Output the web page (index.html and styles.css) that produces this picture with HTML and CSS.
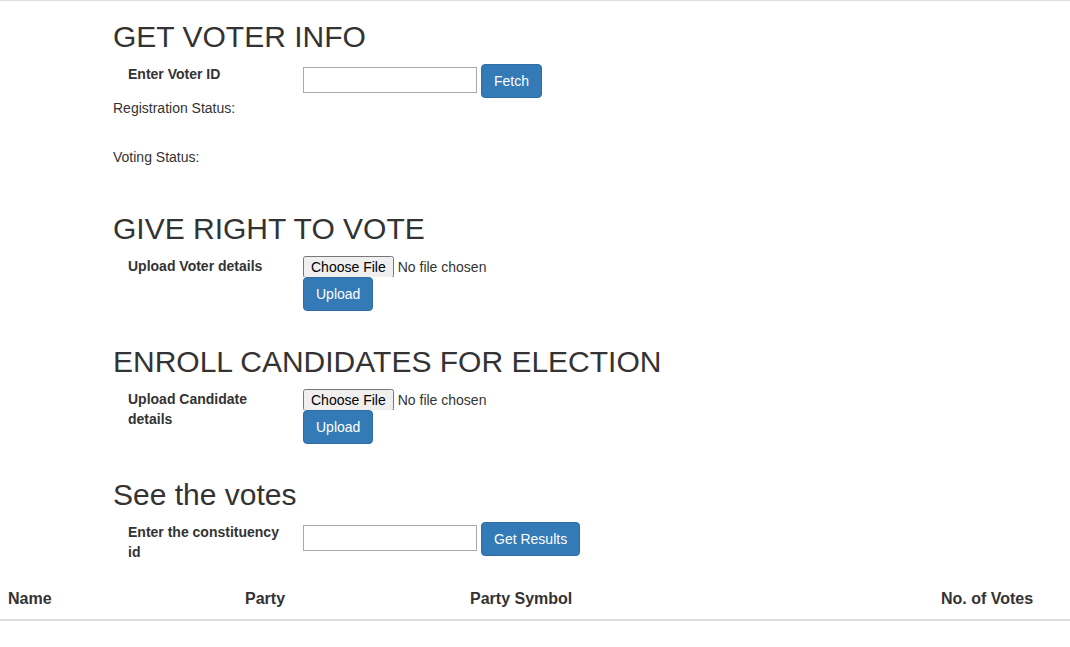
FILE: index.html
```html
<!DOCTYPE html>
<html lang="en">
<head>
<meta charset="utf-8">
<title>Voting Admin</title>
<link rel="stylesheet" href="styles.css">
</head>
<body>
<div class="forms">
  <section class="sec sec-info">
    <h2 class="title">GET VOTER INFO</h2>
    <div class="row">
      <label class="lbl" for="vid">Enter Voter ID</label>
      <div class="field inline">
        <input class="txt" id="vid" type="text">
        <button class="btn" type="button">Fetch</button>
      </div>
    </div>
    <p class="status status-reg">Registration Status:</p>
    <p class="status status-vote">Voting Status:</p>
  </section>

  <section class="sec">
    <h2 class="title">GIVE RIGHT TO VOTE</h2>
    <div class="row row-gap">
      <label class="lbl">Upload Voter details</label>
      <div class="field stack">
        <input class="file" type="file">
        <button class="btn" type="button">Upload</button>
      </div>
    </div>
  </section>

  <section class="sec">
    <h2 class="title">ENROLL CANDIDATES FOR ELECTION</h2>
    <div class="row row-gap">
      <label class="lbl">Upload Candidate details</label>
      <div class="field stack">
        <input class="file" type="file">
        <button class="btn" type="button">Upload</button>
      </div>
    </div>
  </section>

  <section class="sec">
    <h2 class="title">See the votes</h2>
    <div class="row row-last">
      <label class="lbl" for="cid">Enter the constituency id</label>
      <div class="field inline">
        <input class="txt" id="cid" type="text">
        <button class="btn" type="button">Get Results</button>
      </div>
    </div>
  </section>
</div>

<table class="results">
  <colgroup>
    <col class="c-name">
    <col class="c-party">
    <col class="c-symbol">
    <col class="c-votes">
  </colgroup>
  <thead>
    <tr>
      <th>Name</th>
      <th>Party</th>
      <th>Party Symbol</th>
      <th>No. of Votes</th>
    </tr>
  </thead>
  <tbody></tbody>
</table>
</body>
</html>
```

FILE: styles.css
```css
* {
  box-sizing: border-box;
}

html, body {
  background: #fff;
}

body {
  margin: 0;
  border-top: 1px solid #dddddd;
  font-family: "Liberation Sans", Arial, Helvetica, sans-serif;
  font-size: 14px;
  line-height: 1.42857;
  color: #333333;
}

.forms {
  padding-left: 113px;
}

.sec {
  display: flow-root;
}

.title {
  margin: 19px 0 11px;
  font-size: 30px;
  line-height: 1.1;
  font-weight: 500;
  color: #333333;
}

.row {
  display: flex;
  align-items: flex-start;
}

.row-gap {
  margin-bottom: 15px;
}

.row-last {
  margin-bottom: 17px;
}

.lbl {
  width: 190px;
  flex: none;
  padding: 1px 15px 0;
  font-weight: bold;
}

.field {
  display: flex;
}

.field.inline {
  gap: 4px;
  align-items: flex-start;
}

.field.stack {
  flex-direction: column;
  align-items: flex-start;
}

.txt {
  width: 174px;
  height: 26px;
  margin-top: 3px;
  padding: 1px 2px;
  border: 1px solid #a9a9a9;
  font: inherit;
  color: #333;
  background: #fff;
}

.file {
  height: 21px;
  font-family: "Liberation Sans", Arial, sans-serif;
  font-size: 14px;
  line-height: 20px;
  color: #333;
  padding: 0;
  margin: 0;
}

.btn {
  height: 34px;
  padding: 6px 12px;
  font-family: inherit;
  font-size: 14px;
  line-height: 20px;
  color: #fff;
  background: #337ab7;
  border: 1px solid #2e6da4;
  border-radius: 4px;
  cursor: pointer;
}

.status {
  margin: 0;
}

.status-reg {
  margin-top: 1px;
  margin-bottom: 29px;
}

.status-vote {
  margin-bottom: 25px;
}

.results {
  width: 100%;
  border-collapse: collapse;
  border-spacing: 0;
}

.c-name { width: 237px; }
.c-party { width: 225px; }
.c-symbol { width: 471px; }
.c-votes { width: 137px; }

.results th {
  padding: 8px;
  text-align: left;
  font-size: 16px;
  font-weight: bold;
  line-height: 1.42857;
  border-bottom: 2px solid #dddddd;
  vertical-align: bottom;
}
```
